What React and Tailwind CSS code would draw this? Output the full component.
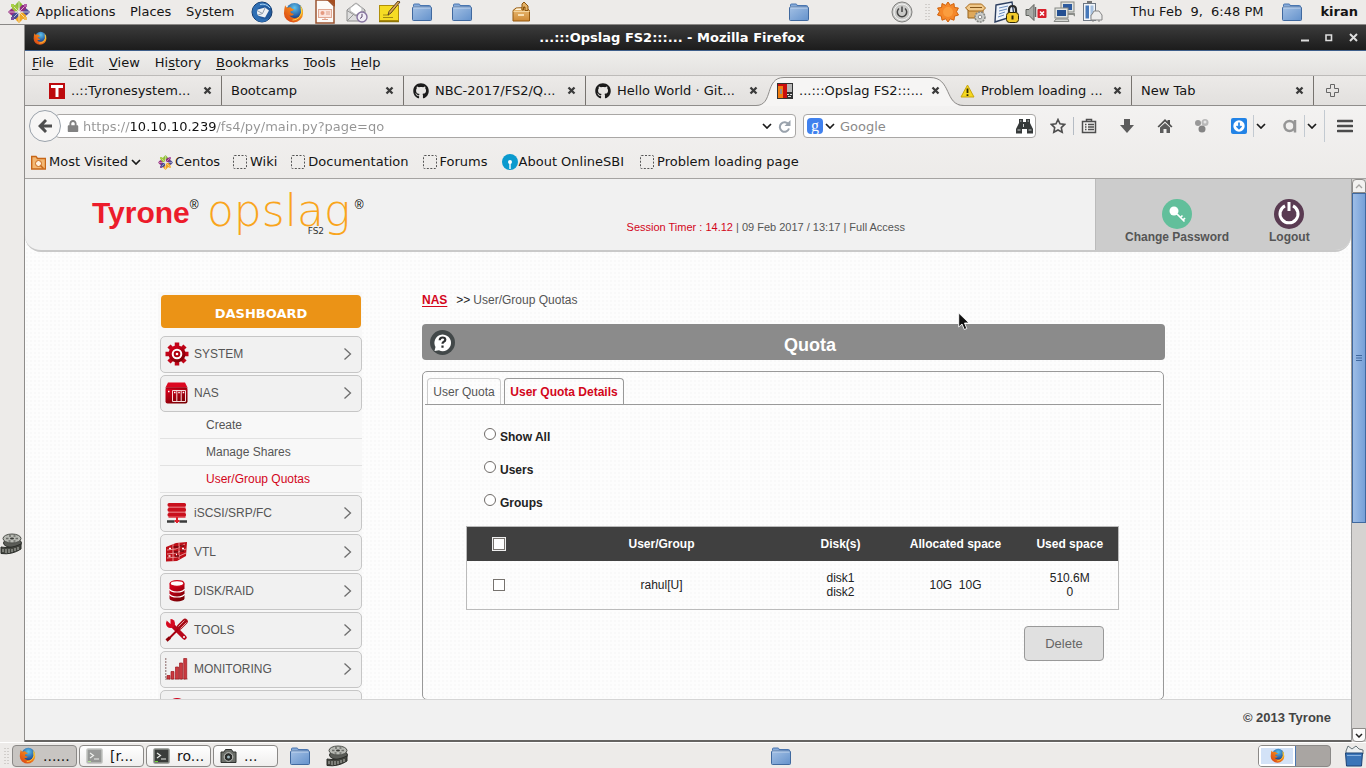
import React from "react";
import { FaGithub, FaLock } from "react-icons/fa";

const Defs = () => (
  <svg className="absolute h-0 w-0" aria-hidden="true">
    <defs>
      <linearGradient id="folderG" x1="0" y1="0" x2="1" y2="1">
        <stop offset="0" stopColor="#a3c0e4" />
        <stop offset="1" stopColor="#6492cc" />
      </linearGradient>
      <radialGradient id="foxBlue" cx=".5" cy=".3" r=".6">
        <stop offset="0" stopColor="#5fc4ee" />
        <stop offset="1" stopColor="#1c4a95" />
      </radialGradient>
      <linearGradient id="foxOrange" x1="0" y1="1" x2="1" y2="0">
        <stop offset="0" stopColor="#d63a12" />
        <stop offset=".55" stopColor="#f07d1a" />
        <stop offset="1" stopColor="#fbd12c" />
      </linearGradient>
      <linearGradient id="redG" x1="0" y1="0" x2=".6" y2="1">
        <stop offset="0" stopColor="#e4001f" />
        <stop offset="1" stopColor="#7c0005" />
      </linearGradient>
      <linearGradient id="boxG" x1="0" y1="0" x2="0" y2="1">
        <stop offset="0" stopColor="#ecc07b" />
        <stop offset="1" stopColor="#cf8a35" />
      </linearGradient>
    </defs>
  </svg>
);

const Icon = ({ w = 22, h = 22, vb, children, className = "" }) => (
  <svg width={w} height={h} viewBox={vb || `0 0 ${w} ${h}`} className={`shrink-0 ${className}`} aria-hidden="true" fill="none">
    {children}
  </svg>
);

const Folder = () => (
  <Icon vb="0 0 22 22">
    <path d="M2.500 5.500V4q0-1 1-1h4.500q1 0 1 1.500h9.500q1 0 1 1V6" fill="#86abda" stroke="#4a76b0" />
    <rect x="1.500" y="6" width="19" height="13.500" rx="1" fill="url(#folderG)" stroke="#40699f" />
    <path d="M2.500 7h17" stroke="#c3d6ee" />
  </Icon>
);

const Firefox = ({ s = 21 }) => (
  <Icon w={s} h={s} vb="0 0 22 22">
    <circle cx="12" cy="9.500" r="8.500" fill="url(#foxBlue)" />
    <path d="M2.200 3.500Q1 8 1 12a10 9.500 0 0 0 20 0q.3-5-3.200-8.500 1.700 4 1 7.500-1 6-7 6-3.500 0-5.200-3 2.500.8 4.400-.7.500-.5-.3-.9-2.300-.2-3.200-1.800.2-1.300 2.600-1.400l1.800-1.500Q9 7.500 8 5.500 5.500 5.300 4.500 6 3 5.500 2.200 3.500Z" fill="url(#foxOrange)" />
    <path d="M19 6q2 6-2 10-3 3-7 3" stroke="#fcd94a" strokeWidth="1" />
  </Icon>
);

const Thunderbird = () => (
  <Icon>
    <circle cx="11" cy="11" r="10" fill="#235a9c" stroke="#143a6c" />
    <path d="M5 9l9-2.500 4 3-4 7-8-2Z" fill="#eef1f4" />
    <path d="M5 9l6.500 3.500L14 7M6 14.500l5.500-2" stroke="#8f9cab" />
    <path d="M1.500 12Q1 4 9 1.500q8-1 11.500 6Q17 4 12.500 5 7 5.500 6 10q-.5 4.500 4 7.500 5 2 8.500-1Q16 21 10.500 21 3 20 1.500 12Z" fill="#2f6fb4" />
    <path d="M9 3.500q6-1.500 10 3.500" stroke="#a5cfef" />
  </Icon>
);

const Impress = () => (
  <Icon h={24}>
    <path d="M2 0h12l6 6v17H2Z" fill="#fdfbf9" stroke="#9a5431" strokeWidth="1.500" />
    <path d="M12 0h9v7q-3-5-9-7Z" fill="#a54e21" />
    <rect x="4.500" y="9.500" width="13" height="8" fill="#fbe3dc" stroke="#e0a893" />
    <circle cx="8.500" cy="13" r="2" fill="#e69a80" />
    <path d="M12 12h4M12 14h4M8 19.500h6M11 17.500v2" stroke="#e0a08a" />
  </Icon>
);

const Mail = () => (
  <Icon>
    <path d="M1 9l9-7 9 7v11H1Z" fill="#dedede" stroke="#8c8c8c" />
    <path d="M4 7l6-4.500L16 7v3l-6 4-6-4Z" fill="#fff" stroke="#b5b5b5" />
    <path d="M1 20l7-7M1 9.500l9 5.500 9-5.500" stroke="#949494" />
    <circle cx="16" cy="16" r="5" fill="#f2eef6" stroke="#8775a0" strokeWidth="1.400" />
    <path d="M16 12.800V16l-2 1.500" stroke="#554466" />
  </Icon>
);

const Note = () => (
  <Icon w={24}>
    <rect x="1.500" y="4.500" width="19" height="15" fill="#f6dc24" stroke="#b19009" />
    <path d="M1 20.500h20" stroke="#907607" strokeWidth="1.500" />
    <path d="M5 14h6M5 16.500h10" stroke="#a08912" />
    <path d="M22 1l-9 11-3 2 1-3.500L20 0Z" fill="#dba650" stroke="#5b4320" />
  </Icon>
);

const PackageBox = () => (
  <Icon w={20}>
    <path d="M2 9.500L5 7l10-.500 3.500 3V20H2Z" fill="url(#boxG)" stroke="#94590f" />
    <path d="M4 9h6V7.500H5.500Z" fill="#fff3dc" />
    <path d="M11 9V3l2-2 4 4v4.500h-3V6h-1.500v3Z" fill="#e5b267" stroke="#8c550e" />
    <path d="M2.500 10.500h16" stroke="#f4d59f" />
    <rect x="7" y="13" width="6" height="2" fill="#f8dfb3" />
  </Icon>
);

const Centos = ({ s = 22 }) => (
  <Icon w={s} h={s} vb="0 0 22 22">
    <path d="M4 4h6.500v6.500H4Z" fill="#a0c43c" />
    <path d="M11.500 4H18v6.500h-6.500Z" fill="#8f2c82" />
    <path d="M4 11.500h6.500V18H4Z" fill="#4a4d94" />
    <path d="M11.500 11.500H18V18h-6.500Z" fill="#efa724" />
    <path d="M11 0l3.500 3.500L11 7.500 7.500 3.500Z" fill="#8cbf3a" />
    <path d="M22 11l-3.500 3.500L14.500 11l4-3.500Z" fill="#4f4c96" />
    <path d="M11 22l-3.500-3.500L11 14.500l3.500 4Z" fill="#f0a622" />
    <path d="M0 11l3.500-3.500L7.500 11l-4 3.500Z" fill="#982c83" />
    <path d="M4 4l14 14M18 4L4 18M11 1v20M1 11h20" stroke="#f3f0e8" strokeWidth=".7" />
    <path d="M3 3h3v3H3Z" fill="#a9d049" />
    <path d="M16 3h3v3h-3Z" fill="#b25fa8" />
    <path d="M3 16h3v3H3Z" fill="#7b4ea0" />
    <path d="M16 16h3v3h-3Z" fill="#f2bc58" />
  </Icon>
);

const Power = () => (
  <Icon>
    <circle cx="11" cy="11" r="10" fill="#cacac8" stroke="#80807e" />
    <circle cx="11" cy="11" r="8" stroke="#f2f2f2" />
    <path d="M8 7.500a4.700 4.700 0 1 0 6 0M11 5.500v5.500" stroke="#454545" strokeWidth="1.500" />
  </Icon>
);

const Sun = () => (
  <Icon>
    <path d="M11 1l2.300 3.300L17 2.500l.4 4 4 .5-1.900 3.700 2 3.300-4 1.200-.5 4-3.800-1.400L11 21l-2.300-3.200L5 19.200l-.6-4-3.900-1.200 2-3.300L.600 7l4-.5.4-4 3.700 1.800Z" fill="#f5882a" stroke="#d26109" />
    <circle cx="11" cy="11" r="5" fill="#fb9d3e" />
  </Icon>
);

const BoxGear = () => (
  <Icon>
    <path d="M3 8h15v9H3Z" fill="#dfa95c" stroke="#95621c" />
    <path d="M0.500 7l4-4h12l4 4-3 3H4Z" fill="#f0c88a" stroke="#a6691b" />
    <path d="M5 6.500h12" stroke="#845519" />
    <circle cx="15" cy="16" r="5" fill="#c9cbc8" stroke="#858783" strokeWidth="1.500" strokeDasharray="2 1" />
    <circle cx="15" cy="16" r="1.800" fill="#fff" stroke="#888" />
  </Icon>
);

const LockNote = () => (
  <Icon w={26}>
    <path d="M3 4l16-3 2 14-19 6Z" fill="#eef3fa" stroke="#2c3e5f" strokeWidth="1.400" />
    <path d="M6 7l9-2M6 10l8-2M6 13l6-2M5 16l6-2" stroke="#6c8ec0" />
    <path d="M16 12V9q0-4 3.500-4T23 9v3" stroke="#2a2a2a" strokeWidth="2.200" />
    <rect x="13.500" y="11.500" width="12" height="10" rx="3" fill="#f3cb2b" stroke="#2d2606" />
    <path d="M19.500 14.500v4" stroke="#2a2205" strokeWidth="2" />
  </Icon>
);

const Volume = () => (
  <Icon>
    <path d="M1 8.500h3l5-5v16l-5-5H1Z" fill="#a8aaa6" stroke="#5e605c" />
    <path d="M10.500 6v10" stroke="#666" strokeWidth="1.500" />
    <rect x="12.500" y="8" width="9" height="9" rx="1" fill="#d81f2a" />
    <path d="M15 10.500l4 4M19 10.500l-4 4" stroke="#fff" strokeWidth="1.600" />
  </Icon>
);

const Monitors = () => (
  <Icon>
    <rect x="8" y="1" width="13" height="10" fill="#e2e4e0" stroke="#858783" />
    <rect x="10" y="3" width="9" height="6" fill="#2d5b9f" />
    <path d="M14 13h7l1 2" stroke="#8b8d89" strokeWidth="2" />
    <rect x="2" y="7" width="13" height="10" fill="#e2e4e0" stroke="#858783" />
    <rect x="4" y="9" width="9" height="6" fill="#244f91" />
    <path d="M1 20.500h15l-1-2.500H3Z" fill="#d6d8d4" stroke="#858783" />
  </Icon>
);

const Battery = () => (
  <Icon>
    <rect x="2.500" y="2.500" width="12" height="17" fill="#f2f5f9" stroke="#6e7885" />
    <path d="M4.500 4.500h3.500v13H4.500Z" fill="#4678b9" />
    <path d="M9.500 4.500h3v13h-3Z" fill="#a5c0e0" />
    <path d="M6 1h5" stroke="#777" strokeWidth="2" />
    <path d="M11 13.500L13 10h5l3 4v5H10v-5ZM12 19v2M18 19v2" fill="#ececec" stroke="#858585" />
  </Icon>
);

const Film = () => (
  <Icon>
    <ellipse cx="12.500" cy="10" rx="9" ry="4.500" fill="#5a5c57" stroke="#2c2e2a" />
    <ellipse cx="12" cy="5.500" rx="9" ry="4.500" fill="#b8bab4" stroke="#4c4e49" />
    <ellipse cx="12" cy="5.500" rx="2" ry="1" fill="#3b3d39" />
    <path d="M6 5.500h2.500M15.500 5.500H18M9 3h2M13.500 8h2M8.500 8h2M13.500 3h2" stroke="#6b6d68" strokeWidth="1.300" />
    <path d="M1 14q10 2 20-3v5q-9 6-20 4.500Z" fill="#43453f" stroke="#2b2d29" />
    <path d="M3 16v3M6 16v4M9 16v4M12 16v3M15 15v3M18 14v3" stroke="#b5b7b1" />
  </Icon>
);

const Terminal = ({ dim }) => (
  <Icon w={17} h={16} className={dim ? "opacity-50" : ""}>
    <rect x="1" y="1" width="15" height="14" rx="1" fill="#3a3d3a" stroke="#8b8e89" strokeWidth="1.500" />
    <path d="M4 5l3.500 2.500L4 10M8 11h5" stroke="#e8ebe6" strokeWidth="1.200" />
    <path d="M2 13.500h3" stroke="#6fd835" />
  </Icon>
);

const Camera = () => (
  <Icon w={17} h={16}>
    <path d="M1 4h3l1.500-2.500h6L13 4h3v10.500H1Z" fill="#6b6e69" stroke="#30322f" />
    <circle cx="8.500" cy="9" r="4.300" fill="#2a2c2a" stroke="#c9cbc6" />
    <circle cx="8.500" cy="9" r="1.500" fill="#9db6bd" />
  </Icon>
);

const TrashCan = () => (
  <Icon>
    <path d="M3 6l2-5 4 3 4-3 3 3 4 1v4H3Z" fill="#eceff0" stroke="#68757a" />
    <path d="M2.500 8h17l-1 13h-15Z" fill="#3b75b8" stroke="#1b4274" />
    <path d="M4 10.500h14" stroke="#88b2e0" />
  </Icon>
);

const Grip = () => (
  <Icon w={6} h={18}>
    <path d="M1 1v17M4 1v17" stroke="#b4b0ac" strokeWidth="1" strokeDasharray="1 2" />
  </Icon>
);

const Chevron = () => (
  <Icon w={10} h={6}>
    <path d="M1 1l4 4 4-4" stroke="#1a1a1a" strokeWidth="1.700" />
  </Icon>
);

const TabClose = () => (
  <button aria-label="Close tab" className="flex h-4 w-3 items-center justify-center">
    <Icon w={9} h={9}>
      <path d="M1.500 1.500l6 6M7.500 1.500l-6 6" stroke="#3b3b3b" strokeWidth="2.300" />
    </Icon>
  </button>
);

const tabs = [
  {
    title: "..::Tyronesystem...",
    icon: (
      <Icon w={16} h={16}>
        <path d="M0 0h16v16H0Z" fill="#bd0a0d" />
        <path d="M2 3.500h12M8 3v11" stroke="#fff" strokeWidth="3" />
      </Icon>
    ),
  },
  { title: "Bootcamp" },
  { title: "NBC-2017/FS2/Q...", icon: <FaGithub size={16} color="#1b1b1b" className="shrink-0" /> },
  { title: "Hello World · Git...", icon: <FaGithub size={16} color="#1b1b1b" className="shrink-0" /> },
  {
    title: "...:::Opslag FS2:::...",
    active: true,
    icon: (
      <Icon w={16} h={16}>
        <path d="M0 0h16v16H0Z" fill="#333" />
        <path d="M1 2h5v13H1Z" fill="#f07e11" />
        <path d="M3 6h2v5H3Z" fill="#8f8f8f" />
        <path d="M1 1h9v2H1ZM6 3h4v12H6Z" fill="#c90d0d" />
        <path d="M10 1h5v8h-5Z" fill="#b7b7b7" />
        <path d="M10 11.500h2M13 11.500h2M11 13.500h3" stroke="#ddd" />
      </Icon>
    ),
  },
  {
    title: "Problem loading ...",
    icon: (
      <Icon w={15} h={14}>
        <path d="M7.500 1L14 13H1Z" fill="#f6d81f" stroke="#c9a60c" strokeLinejoin="round" />
        <path d="M7.500 4.500v4.500M7.500 10.300v1.700" stroke="#2e2700" strokeWidth="1.800" />
      </Icon>
    ),
  },
  { title: "New Tab" },
];

const Tab = ({ tab }) => (
  <div className="relative flex h-[29px] w-[182px] items-center gap-1.5 pl-[9px] pr-[9px]">
    {tab.active && (
      <svg className="absolute -left-3 top-0 h-[30px] w-[208px]" viewBox="0 0 208 30" fill="none" aria-hidden="true">
        <path d="M0 29.500C18 29.500 8 1.500 28 1.500H174C196 1.500 188 29.500 206 29.500V30H0Z" fill="#f6f5f4" />
        <path d="M0 29.500C18 29.500 8 1.500 28 1.500H174C196 1.500 188 29.500 208 29.500" stroke="#8f8d8b" />
      </svg>
    )}
    {tab.icon && <span className="relative flex w-4 shrink-0 justify-center">{tab.icon}</span>}
    <span className="relative flex-1 overflow-hidden whitespace-nowrap">{tab.title}</span>
    <span className="relative">
      <TabClose />
    </span>
  </div>
);

const separatorAfter = [true, true, true, false, false, true, true];

const BookmarkBlank = () => (
  <Icon w={14} h={14}>
    <rect x=".5" y=".5" width="13" height="13" rx="1" stroke="#555" strokeDasharray="2 1.500" />
  </Icon>
);

const bookmarks = [{ t: "Wiki" }, { t: "Documentation" }, { t: "Forums" }];

const Toolbar = () => (
  <div className="flex h-10 items-center pl-1 pr-[13px]">
    <button aria-label="Back" className="relative z-10 flex h-8 w-8 shrink-0 items-center justify-center rounded-full border border-[#9aa2ab] bg-[#f7f6f5]">
      <Icon w={16} h={16}>
        <path d="M8 1L1 8l7 7 2-2-3.200-3.500H15v-3H6.800L10 3Z" fill="#4e4e4e" />
      </Icon>
    </button>
    <label className="-ml-1.5 flex h-6 flex-1 items-center gap-1 rounded-sm border border-[#a9a7a5] bg-white pl-[11px] pr-1">
      <FaLock size={12} color="#828282" className="shrink-0" />
      <input
        aria-label="Address"
        defaultValue="https://10.10.10.239/fs4/py/main.py?page=qo"
        className="h-5 min-w-0 flex-1 bg-[linear-gradient(90deg,#949494_47px,#111_47px,#111_134px,#949494_134px)] bg-clip-text text-transparent caret-black outline-none"
      />
      <Chevron />
      <Icon w={13} h={13} className="ml-0.5">
        <path d="M10.500 4.500A4.700 4.700 0 1 0 11 8.500" stroke="#99a2ac" strokeWidth="2" />
        <path d="M12.500 0v6h-6Z" fill="#99a2ac" />
      </Icon>
    </label>
    <label className="ml-[7px] flex h-6 w-[233px] shrink-0 items-center rounded-sm border border-[#a9a7a5] bg-white pl-[3px] pr-0.5">
      <span className="flex h-4 w-4 items-center justify-center rounded-sm bg-[#4081ee] font-['Liberation_Serif',serif] text-base leading-none text-white">g</span>
      <span className="ml-0.5">
        <Chevron />
      </span>
      <input aria-label="Search" placeholder="Google" className="ml-[5px] h-5 min-w-0 flex-1 bg-transparent outline-none placeholder:text-[#8a8a8a]" />
      <Icon w={17} h={16}>
        <path d="M3 1h4v3h3V1h4v4l3 6v4.500h-6V11H6v4.500H0V11l3-6Z" fill="#363a3a" />
        <path d="M1.500 12h3M12.500 12h3M4 3h1.500M11.500 3H13M7.500 6v3" stroke="#c8cccc" />
      </Icon>
    </label>
    <div className="ml-3.5 flex h-8 shrink-0 items-center">
      <Icon w={16} h={16}>
        <path d="M8 1.500l2 4.300 4.700.6-3.400 3.200.9 4.700L8 12l-4.200 2.300.9-4.700L1.300 6.400 6 5.800Z" stroke="#4e4e4e" strokeWidth="1.600" />
      </Icon>
      <span className="ml-[7px] mr-[7px] h-[18px] w-px bg-[#b5bcc4]" />
      <Icon w={16} h={16}>
        <path d="M1.500 3.500h13v11h-13ZM5.500 3V1.500h5V3M4 6.500h1.500M7 6.500h6M4 9h1.500M7 9h6M4 11.500h1.500M7 11.500h6" stroke="#4e4e4e" strokeWidth="1.500" />
      </Icon>
      <Icon w={16} h={16} className="ml-[22px]">
        <path d="M5 1h6v6h4l-7 8-7-8h4Z" fill="#5c5c5c" />
      </Icon>
      <Icon w={16} h={16} className="ml-[22px]">
        <path d="M8 1L.5 8.500l1.300 1L8 3.500l6.200 6 1.300-1L13 6V2h-2.500v1.500Z" fill="#4e4e4e" />
        <path d="M3 9.500L8 5l5 4.500V15H9.500v-4h-3v4H3Z" fill="#5c5c5c" />
      </Icon>
      <Icon w={16} h={16} className="ml-[21px]">
        <circle cx="4" cy="5" r="3" fill="#989898" />
        <circle cx="11" cy="4.500" r="3.500" fill="#b9b9b9" />
        <circle cx="8" cy="11" r="3.500" fill="#848484" />
        <circle cx="11" cy="4" r="1.500" fill="#e6e6e6" />
      </Icon>
      <Icon w={16} h={16} className="ml-[21px]">
        <rect width="16" height="16" rx="2" fill="#2283e6" />
        <circle cx="8" cy="8" r="5.700" fill="#fff" />
        <path d="M8 4.500v5M5.500 8L8 10.500 10.500 8" stroke="#2283e6" strokeWidth="1.700" />
      </Icon>
      <span className="ml-1.5 mr-0.5 h-[22px] w-px bg-[#c3cad1]" />
      <Chevron />
      <span className="ml-[17px]">
        <Icon w={14} h={14}>
          <circle cx="6.500" cy="7" r="5" stroke="#969696" strokeWidth="2.500" />
          <path d="M12 1v12.500" stroke="#969696" strokeWidth="2.500" />
        </Icon>
      </span>
      <span className="ml-[7px] mr-0.5 h-[22px] w-px bg-[#c3cad1]" />
      <Chevron />
      <span className="ml-[7px] mr-3 h-8 w-px bg-[#c3cad1]" />
      <button aria-label="Open menu" className="flex">
        <Icon w={16} h={14}>
          <path d="M1 2h14M1 7h14M1 12h14" stroke="#4b4b4b" strokeWidth="2.600" strokeLinecap="round" />
        </Icon>
      </button>
    </div>
  </div>
);

const TopPanel = () => (
  <header className="flex h-[25px] shrink-0 items-center border-b border-[#8a8886] bg-[#edebe9] pl-2 pr-2">
    <Centos />
    <nav className="ml-1.5 flex gap-[15px]">
      <a href="#apps" className="w-[79px]">Applications</a>
      <a href="#places" className="w-[41px]">Places</a>
      <a href="#system" className="w-[50px]">System</a>
    </nav>
    <div className="ml-[15px] flex items-center gap-2.5">
      <Thunderbird />
      <Firefox />
      <Impress />
      <Mail />
      <Note />
    </div>
    <div className="ml-[9px] flex items-center gap-[18px]">
      <Folder />
      <Folder />
    </div>
    <span className="ml-[38px]">
      <PackageBox />
    </span>
    <span className="ml-[257px]">
      <Folder />
    </span>
    <div className="ml-auto flex items-center">
      <Power />
      <span className="ml-3 mr-1.5">
        <Grip />
      </span>
      <div className="flex items-center gap-1.5">
        <Sun />
        <BoxGear />
        <LockNote />
        <Volume />
        <Monitors />
        <Battery />
      </div>
      <time className="ml-7 whitespace-pre">Thu Feb  9,  6:48 PM</time>
      <span className="ml-[18px] mr-[17px]">
        <Folder />
      </span>
      <span className="font-bold">kiran</span>
    </div>
  </header>
);

const MenuBar = () => (
  <nav className="flex h-[25px] items-center gap-[15px] border-b border-[#bdbbb9] bg-gradient-to-b from-[#efeeec] to-[#e4e2e0] pl-[7px]">
    {[
      ["", "F", "ile"],
      ["", "E", "dit"],
      ["", "V", "iew"],
      ["Hi", "s", "tory"],
      ["", "B", "ookmarks"],
      ["", "T", "ools"],
      ["", "H", "elp"],
    ].map(([a, k, b]) => (
      <button key={k + b}>
        {a}
        <span className="underline underline-offset-2">{k}</span>
        {b}
      </button>
    ))}
  </nav>
);

const Arrow = () => (
  <Icon w={9} h={14}>
    <path d="M1.500 1.500L7.500 7l-6 5.500" stroke="#6e6e6e" strokeWidth="1.300" />
  </Icon>
);

const menuIcons = {
  SYSTEM: (
    <Icon w={24} h={24}>
      <path d="M12 .5v23M.5 12h23M4 4l16 16M20 4L4 20" stroke="#c00418" strokeWidth="4.500" />
      <circle cx="12" cy="12" r="8.500" fill="url(#redG)" />
      <circle cx="12" cy="12" r="4.300" fill="#b0000d" stroke="#fff" strokeWidth="2" />
      <circle cx="12" cy="12" r="1.300" fill="#fff" />
    </Icon>
  ),
  NAS: (
    <Icon w={24} h={24}>
      <path d="M3 1.500h17l2.500 5H.5Z" fill="#dc0720" />
      <rect x=".5" y="6.500" width="22" height="16" rx="2" fill="url(#redG)" />
      <path d="M.5 7h22" stroke="#7d0008" strokeWidth=".8" />
      <path d="M7.500 9.500h13v11h-13ZM11.800 9.500v11M16.200 9.500v11" stroke="#f6dcdc" />
      <path d="M3 10.500h1.500M9 11.500h1.500M13.300 11.500h1.500M17.700 11.500h1.500" stroke="#fff" strokeWidth="1.400" />
    </Icon>
  ),
  "iSCSI/SRP/FC": (
    <Icon w={24} h={24}>
      <path d="M3.500 3h17v14h-17Z" fill="#e2636b" />
      {[2, 7, 12].map((y) => (
        <rect key={y} x="2.500" y={y} width="18.500" height="3.600" rx="1.500" fill="#c9101d" />
      ))}
      <path d="M12 16v6M9.500 20h5" stroke="#e0202c" strokeWidth="2" />
      <path d="M2 20.500h7.500M14.500 20.500H22" stroke="#3b3b3b" strokeWidth="2.300" />
    </Icon>
  ),
  VTL: (
    <Icon w={24} h={24}>
      <path d="M1 7l10-4 11-1-1 14-9 5-11 .5Z" fill="#bd0f18" />
      <path d="M2 10l9-1 9-5M2 14l9-1 10-4M2 18l10-1 9-4M8 4v17M14 3v16" stroke="#ea9c9c" strokeWidth=".9" />
      <path d="M8.500 7h5M9 12h4M10 16h4M15 6h4M15 11h4" stroke="#6d060c" strokeWidth="1.500" />
      <path d="M4 8.500h2M3.500 16h2M11 14.500h1M17 8.500h2" stroke="#fff" strokeWidth="1.300" />
    </Icon>
  ),
  "DISK/RAID": (
    <Icon w={24} h={24}>
      <path d="M4.500 4.500h15v15a7.500 3 0 0 1-15 0Z" fill="url(#redG)" />
      <ellipse cx="12" cy="4.500" rx="6.900" ry="2.800" fill="#fff" stroke="#cc0718" strokeWidth="1.300" />
      <path d="M4.500 10a7.500 3 0 0 0 15 0M4.500 15a7.500 3 0 0 0 15 0" stroke="#fff" strokeWidth="1.200" />
    </Icon>
  ),
  TOOLS: (
    <Icon w={24} h={24}>
      <path d="M19.500 19.500L7 7" stroke="#b8061a" strokeWidth="4.500" strokeLinecap="round" />
      <circle cx="5.500" cy="5.500" r="4.500" fill="#d60a20" />
      <path d="M0 1l5.500 5L5.500 0Z" fill="#f1f1f1" />
      <path d="M4 20.500L13 11.500" stroke="#a70010" strokeWidth="2" />
      <path d="M1.500 22.500l3.500-3" stroke="#8f0009" strokeWidth="3" />
      <path d="M14.500 9L20 3.500" stroke="#a80b16" strokeWidth="5.500" strokeLinecap="round" />
      <path d="M13.500 8.500l6-6M15.500 10.500l6-6" stroke="#f0bcbc" strokeWidth=".8" />
      <circle cx="19" cy="19" r="1" fill="#fff" />
    </Icon>
  ),
  MONITORING: (
    <Icon w={24} h={24}>
      <path d="M.8 1v21.500M.5 22h22" stroke="#8a6a6a" strokeDasharray="2 1" />
      <path d="M2 18.500h3V22H2ZM6 14.500h3V22H6ZM10.500 10h3v12h-3ZM14.500 6h3v16h-3ZM18.700 1.500h3V22h-3Z" fill="#c93a40" stroke="#9d1a20" strokeWidth=".7" />
    </Icon>
  ),
  REPORTS: (
    <Icon w={24} h={24}>
      <circle cx="12" cy="12" r="10" fill="#d0001a" />
    </Icon>
  ),
};

const MenuItem = ({ name, hideLabel }) => (
  <button
    aria-label={hideLabel ? "More" : undefined}
    className="flex h-[37px] w-full shrink-0 items-center gap-[5px] rounded-[5px] border border-[#c6c6c6] bg-[#f1f1f1] pb-0.5 pl-1 pr-[9px] text-left"
  >
    {menuIcons[name]}
    <span className="flex-1">{hideLabel ? "" : name}</span>
    <Arrow />
  </button>
);

const Sidebar = () => (
  <aside className="flex w-[204px] shrink-0 flex-col gap-0.5 bg-[#f8f8f8] pl-0.5 pt-[3px] text-[#555]">
    <a href="#dashboard" className="mx-px mb-1.5 flex h-[33px] items-center justify-center rounded bg-[#eb9316] pt-1 font-['DejaVu_Sans',sans-serif] text-[13px] font-bold text-white">
      DASHBOARD
    </a>
    <MenuItem name="SYSTEM" />
    <div>
      <MenuItem name="NAS" />
      <ul>
        {["Create", "Manage Shares", "User/Group Quotas"].map((t, i) => (
          <li key={t} className="flex h-[27px] items-center border-b border-[#e2e2e2] pl-[46px]">
            <a href="#nas" className={i === 2 ? "text-[#d3061b]" : ""}>{t}</a>
          </li>
        ))}
      </ul>
    </div>
    {["iSCSI/SRP/FC", "VTL", "DISK/RAID", "TOOLS", "MONITORING"].map((n) => (
      <MenuItem key={n} name={n} />
    ))}
    <MenuItem name="REPORTS" hideLabel />
  </aside>
);

const box = "h-3 w-3 appearance-none border border-[#77736f] bg-white align-middle checked:bg-[#555]";

const QuotaPanel = () => (
  <main className="min-w-0 flex-1 text-[#222]">
    <div className="flex h-4 items-center">
      <a href="#nas" className="font-bold text-[#d3061b] underline underline-offset-2">NAS</a>
      <span className="ml-[9px]">&gt;&gt;</span>
      <span className="ml-[3px] text-[#555]">User/Group Quotas</span>
    </div>
    <div className="mt-4 flex h-9 w-full items-center rounded bg-[#8b8b8b] pl-2">
      <Icon w={25} h={25}>
        <circle cx="12.500" cy="12.500" r="12.500" fill="#424849" />
        <path d="M4.500 21l1-4A8.300 8.300 0 1 1 9 20.300Z" fill="#fff" />
        <path d="M9.700 10.200q0-2.700 2.800-2.700t2.800 2.300q0 1.300-1.500 2-1.300.6-1.300 2M12.500 15.500v2.200" stroke="#2c2f30" strokeWidth="2.200" />
      </Icon>
      <h1 className="flex-1 pt-1.5 text-center text-lg font-bold leading-6 text-white">Quota</h1>
    </div>
    <section className="mr-px mt-[11px] h-[329px] rounded-[5px] border border-[#999] px-0.5 pt-1.5">
      <div className="flex h-[27px] items-end gap-[3px] border-b border-[#999] pl-0.5">
        <button className="h-[26px] w-[74px] rounded-t border border-b-0 border-[#ccc] text-[#555]">User Quota</button>
        <button className="h-[26px] w-[120px] rounded-t border border-b-0 border-[#999] font-bold text-[#d3061b]">User Quota Details</button>
      </div>
      <div className="px-[41px] pt-[15px]">
        <div className="pl-[18px] font-bold">
          {["Show All", "Users", "Groups"].map((t) => (
            <div key={t} className="flex h-[33px] items-center gap-1">
              <input id={t} name="scope" type="radio" className="mb-[5px] h-3 w-3 appearance-none rounded-full border border-[#6f6b68] bg-white checked:bg-[#555]" />
              <label htmlFor={t}>{t}</label>
            </div>
          ))}
        </div>
        <table className="mt-[7px] w-[652px] table-fixed border-collapse border border-[#bbb] text-center">
          <colgroup>
            <col className="w-[65px]" />
            <col className="w-[260px]" />
            <col className="w-[98px]" />
            <col className="w-[132px]" />
            <col className="w-[97px]" />
          </colgroup>
          <thead>
            <tr className="h-[34px] bg-[#404040] text-white">
              <th className="pb-0.5"><input type="checkbox" aria-label="Select all" className={`${box} outline outline-1 outline-[#eee]`} /></th>
              <th>User/Group</th>
              <th>Disk(s)</th>
              <th>Allocated space</th>
              <th>Used space</th>
            </tr>
          </thead>
          <tbody>
            <tr className="h-[49px] leading-[14px]">
              <td className="pb-0.5"><input type="checkbox" aria-label="Select rahul[U]" className={box} /></td>
              <td>rahul[U]</td>
              <td>disk1<br />disk2</td>
              <td className="whitespace-pre">10G  10G</td>
              <td>510.6M<br />0</td>
            </tr>
          </tbody>
        </table>
        <div className="mt-4 flex justify-end pr-4">
          <button className="h-[35px] w-20 rounded-sm border border-[#999] bg-[#e0e0e0] text-[13px] text-[#666]">Delete</button>
        </div>
      </div>
    </section>
  </main>
);

const SiteHeader = () => (
  <header className="flex h-[73px] shrink-0 overflow-hidden rounded-b-2xl border-b-2 border-[#c9c9c9] bg-[#f1f1f1]">
    <div className="flex flex-1 items-center justify-between pl-[67px] pr-[190px]">
      <a href="#home" aria-label="Tyrone opslag FS2" className="flex h-10 items-start">
        <span className="text-[30px] font-bold leading-9 text-[#ec1c2b]">Tyrone</span>
        <sup className="top-0 mt-0.5 text-xs leading-4 text-black">®</sup>
        <span className="relative ml-1.5 w-[148px] text-center">
          <span className="block font-['DejaVu_Sans',sans-serif] text-[44px] font-extralight leading-8 text-[#f9a51c]">opslag</span>
          <span className="absolute left-[103px] top-[30px] font-['DejaVu_Sans',sans-serif] text-[9px] leading-3 text-[#333]">FS2</span>
        </span>
        <sup className="top-0 ml-0.5 mt-0.5 text-xs leading-4 text-black">®</sup>
      </a>
      <p className="pt-6 text-[11px] text-[#555]">
        <span className="text-[#d3061b]">Session Timer : 14.12</span> | 09 Feb 2017 / 13:17 | Full Access
      </p>
    </div>
    <nav className="flex w-64 gap-10 border-l border-[#bbb] bg-[#ccc] pl-[29px] pt-5 font-bold text-[#555]">
      <a href="#password" className="flex w-[104px] flex-col items-center whitespace-nowrap">
        <Icon w={30} h={30}>
          <circle cx="15" cy="15" r="15" fill="#62bf9b" />
          <circle cx="12" cy="12" r="4.500" fill="#fff" />
          <path d="M15 15l7.500 7.500M18.500 18.500l2-2M21 21l2-2" stroke="#fff" strokeWidth="1.700" />
        </Icon>
        <span className="leading-4">Change Password</span>
      </a>
      <a href="#logout" className="flex flex-col items-center">
        <Icon w={30} h={30}>
          <circle cx="15" cy="15" r="15" fill="#5a3b52" />
          <path d="M11 6.800a9 9 0 1 0 8 0M15 3v9" stroke="#fff" strokeWidth="3" />
        </Icon>
        <span className="leading-4">Logout</span>
      </a>
    </nav>
  </header>
);

const Scrollbar = () => (
  <div className="flex w-[15px] shrink-0 flex-col border-l border-[#999] bg-[#d5d3d1]">
    <button aria-label="Scroll up" className="flex h-3.5 items-center justify-center rounded-t border border-[#8d8b89] bg-[#f2f1f0]">
      <Icon w={8} h={5}>
        <path d="M1 4l3-3 3 3" stroke="#a5a3a1" strokeWidth="1.300" />
      </Icon>
    </button>
    <div className="flex h-[330px] items-center justify-center border border-[#40699f] bg-gradient-to-r from-[#9dbde6] to-[#76a0d8]">
      <Icon w={6} h={8}>
        <path d="M0 1.500h6M0 4h6M0 6.500h6" stroke="#40699f" />
      </Icon>
    </div>
    <button aria-label="Scroll down" className="mt-auto flex h-3.5 items-center justify-center rounded-b border border-[#8d8b89] bg-[#fbfbfb]">
      <Icon w={8} h={5}>
        <path d="M1 1l3 3 3-3" stroke="#222" strokeWidth="1.500" />
      </Icon>
    </button>
  </div>
);

const TaskButton = ({ icon, children, active }) => (
  <button className={`flex h-[22px] w-[65px] items-center gap-[7px] rounded border border-[#8b8987] pl-1.5 text-sm leading-none ${active ? "bg-[#c8c5c2]" : "bg-gradient-to-b from-white to-[#efeeed]"}`}>
    {icon}
    {children}
  </button>
);

const Taskbar = () => (
  <footer className="flex h-[26px] shrink-0 items-center border-t border-white bg-[#edebe9] pl-1 pr-px">
    <Grip />
    <div className="ml-0.5 flex gap-0.5">
      <TaskButton active icon={<Firefox s={17} />}>......</TaskButton>
      <TaskButton icon={<Terminal dim />}>[r...</TaskButton>
      <TaskButton icon={<Terminal />}>ro...</TaskButton>
      <TaskButton icon={<Camera />}>...</TaskButton>
    </div>
    <span className="ml-[11px]">
      <Folder />
    </span>
    <span className="ml-[15px]">
      <Film />
    </span>
    <span className="ml-[422px]">
      <Folder />
    </span>
    <div className="ml-auto flex h-[22px] w-[73px] overflow-hidden rounded-sm border border-[#8b8987] bg-[#a9a5a2]">
      <span className="flex w-9 items-center justify-center border-2 border-white bg-[#d3e2f7] outline outline-1 outline-[#4a76b0]">
        <Firefox s={15} />
      </span>
    </div>
    <span className="ml-3">
      <TrashCan />
    </span>
  </footer>
);

export default function App() {
  return (
    <div className="relative flex h-screen flex-col overflow-hidden bg-[#edebe9] font-['DejaVu_Sans',sans-serif] text-[13px] leading-4 text-[#151515] [&_svg]:block">
      <Defs />
      <TopPanel />
      <div className="flex min-h-0 flex-1">
        <div className="flex w-[25px] shrink-0 flex-col border-r border-[#8f8d8b] pt-[508px]">
          <Film />
        </div>
        <div className="flex min-w-0 flex-1 flex-col">
          <div className="flex h-[26px] shrink-0 items-center border-b border-[#3f5f8b] bg-gradient-to-b from-[#3c3c3c] to-[#1c1c1c] pl-2 pr-2 text-white">
            <Firefox s={14} />
            <h2 className="flex-1 pr-1 text-center font-bold">...:::Opslag FS2:::... - Mozilla Firefox</h2>
            <div className="flex items-center gap-4">
              <button aria-label="Minimize">
                <Icon w={8} h={9}><path d="M0 7.500h8" stroke="#ddd" strokeWidth="2" /></Icon>
              </button>
              <button aria-label="Maximize">
                <Icon w={8} h={9}><path d="M1 2h5.500v5.500H1Z" stroke="#ddd" strokeWidth="1.600" /></Icon>
              </button>
              <button aria-label="Close">
                <Icon w={9} h={9}><path d="M1 1l7 7M8 1L1 8" stroke="#ddd" strokeWidth="2" /></Icon>
              </button>
            </div>
          </div>
          <MenuBar />
          <div className="flex h-[30px] shrink-0 items-start border-b border-[#8f8d8b] bg-gradient-to-b from-[#eceae8] to-[#e2e0de] pl-[15px]">
            {tabs.map((t, i) => (
              <div key={t.title} className={separatorAfter[i] ? "shadow-[inset_-1px_0_0_#77736f]" : ""}>
                <Tab tab={t} />
              </div>
            ))}
            <button aria-label="New tab" className="ml-3 mt-2">
              <Icon w={13} h={13}>
                <path d="M4.500.5h4v4h4v4h-4v4h-4v-4h-4v-4h4Z" stroke="#666" />
              </Icon>
            </button>
          </div>
          <div className="shrink-0 border-b border-[#a5a3a1] bg-gradient-to-b from-[#f3f2f1] to-[#edebe9]">
            <Toolbar />
            <nav className="flex h-8 items-center pl-1.5">
              <a href="#most" className="flex w-[127px] items-center gap-[3px]">
                <Icon w={15} h={15}>
                  <path d="M.7 14V1.500H5l1.500 2h8V14Z" fill="#f3b873" stroke="#c76617" strokeWidth="1.400" />
                  <circle cx="7.500" cy="8.500" r="3" fill="#fff1dd" stroke="#c76617" />
                  <path d="M9.500 10.500l3 3" stroke="#c76617" strokeWidth="1.500" />
                </Icon>
                <span className="whitespace-nowrap">Most Visited</span>
                <Chevron />
              </a>
              <a href="#centos" className="flex w-[75px] items-center gap-0.5"><Centos s={15} />Centos</a>
              {bookmarks.map((b) => (
                <a key={b.t} href="#bookmark" className="mr-3.5 flex items-center gap-[3px]"><BookmarkBlank />{b.t}</a>
              ))}
              <a href="#sbi" className="mr-4 flex items-center gap-px">
                <Icon w={16} h={16}>
                  <circle cx="8" cy="8" r="8" fill="#0b9ace" />
                  <circle cx="8" cy="8" r="2" fill="#fff" />
                  <path d="M8 8v7" stroke="#fff" strokeWidth="1.400" />
                </Icon>
                About OnlineSBI
              </a>
              <a href="#problem" className="flex items-center gap-[3px]"><BookmarkBlank />Problem loading page</a>
            </nav>
          </div>
          <div className="flex min-h-0 flex-1 font-['Liberation_Sans',Arial,sans-serif] text-xs leading-4">
            <div className="flex min-w-0 flex-1 flex-col border-b-2 border-[#666462] bg-[#fdfdfd] bg-[radial-gradient(#f9f9f9_1px,transparent_1px)] bg-[size:4px_4px]">
              <SiteHeader />
              <div className="min-h-0 flex-1 overflow-hidden">
                <div className="mx-auto flex h-[480px] max-w-[1060px] gap-[60px] pt-10">
                  <Sidebar />
                  <div className="min-w-0 max-w-[743px] flex-1">
                    <QuotaPanel />
                  </div>
                </div>
              </div>
              <footer className="flex h-[41px] shrink-0 items-center justify-end border-t border-[#d5d5d5] bg-[#f1f1f1] pb-1 pr-5 text-[13px] font-bold text-[#444]">
                © 2013 Tyrone
              </footer>
            </div>
            <Scrollbar />
          </div>
        </div>
      </div>
      <Taskbar />
      <svg className="absolute left-[958px] top-[312px] h-[19px] w-3" viewBox="0 0 12 19" aria-hidden="true">
        <path d="M.7 1v14l3.300-3 2.300 5.500 2.500-1L6.500 11H11Z" fill="#111" stroke="#fff" strokeWidth=".9" />
      </svg>
    </div>
  );
}
